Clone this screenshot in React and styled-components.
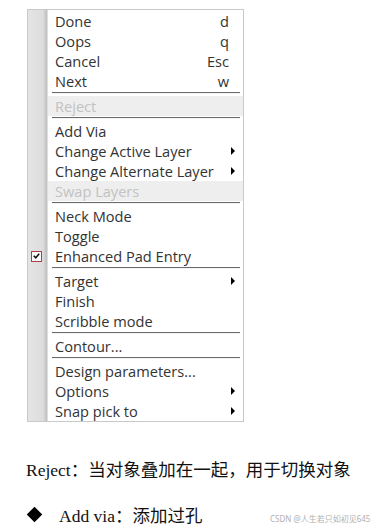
import React from 'react';
import styled, { createGlobalStyle } from 'styled-components';

const GlobalStyle = createGlobalStyle`
  html, body {
    margin: 0;
    padding: 0;
    background: #ffffff;
  }
`;

const Page = styled.div`
  width: 373px;
  height: 531px;
  padding: 9px 0 0 27px;
  box-sizing: border-box;
  position: relative;
  overflow: hidden;
`;

const Menu = styled.div`
  width: 217px;
  box-sizing: border-box;
  border: 1px solid #c9c9c9;
  padding: 1px 0 0;
  background: linear-gradient(
    to right,
    #e4e4e4 0,
    #dddddd 15px,
    #bdbdbd 19px,
    #ffffff 20px
  );
  font-family: 'Open Sans', 'Noto Sans', sans-serif;
  font-size: 14.6px;
  color: #333333;
`;

const Row = styled.div`
  display: grid;
  grid-template-columns: 20px 1fr auto;
  align-items: center;
  height: 20px;
  color: ${(p) => (p.$disabled ? '#c2c2c2' : '#333333')};
  background: ${(p) =>
    p.$disabled
      ? 'linear-gradient(to right, transparent 20px, #eeeeee 20px)'
      : 'transparent'};
`;

const Gutter = styled.div`
  display: flex;
  align-items: center;
  padding-left: 3px;
`;

const Label = styled.span`
  padding-left: 7px;
  white-space: nowrap;
  line-height: 20px;
`;

const Shortcut = styled.span`
  padding-right: 14px;
  line-height: 20px;
`;

const Arrow = styled.span`
  padding-right: 8px;
  display: flex;
  align-items: center;
`;

const Separator = styled.div`
  height: 5px;
  padding: 1px 3px 0 24px;
  box-sizing: border-box;
  &::before {
    content: '';
    display: block;
    height: 1px;
    background: #6a6a6a;
    border-bottom: 1px solid #f4f4f4;
  }
`;

const CheckBox = styled.span`
  width: 11px;
  height: 11px;
  box-sizing: border-box;
  border: 1px solid #b23c4a;
  background: #fafafa;
  display: flex;
  align-items: center;
  justify-content: center;
`;

const Note = styled.p`
  margin: 0;
  font-family: 'Liberation Serif', 'Noto Sans CJK SC', serif;
  font-size: 17.5px;
  color: #111111;
  white-space: nowrap;
`;

const Notes = styled.div`
  padding-top: 34px;
  display: flex;
  flex-direction: column;
  gap: 21px;
  margin-left: -1px;
`;

const Bullet = styled.div`
  display: flex;
  align-items: center;
  gap: 19px;
`;

const Diamond = styled.span`
  width: 11px;
  height: 11px;
  background: #000000;
  transform: rotate(45deg);
  margin-left: 3px;
`;

const Watermark = styled.span`
  position: absolute;
  left: 270px;
  top: 513px;
  font-family: 'Noto Sans', 'Noto Sans CJK SC', sans-serif;
  font-size: 8px;
  color: #b0b0b0;
  white-space: nowrap;
`;

const ArrowIcon = () => (
  <svg width="4" height="8" viewBox="0 0 4 8">
    <path d="M0 0 L4 4 L0 8 Z" fill="#000" />
  </svg>
);

const CheckIcon = () => (
  <svg width="7" height="6" viewBox="0 0 7 6">
    <path d="M0.8 2.8 L2.7 4.8 L6.2 0.8" stroke="#111" strokeWidth="1.5" fill="none" />
  </svg>
);

const groups = [
  [
    { label: 'Done', key: 'd' },
    { label: 'Oops', key: 'q' },
    { label: 'Cancel', key: 'Esc' },
    { label: 'Next', key: 'w' },
  ],
  [{ label: 'Reject', disabled: true }],
  [
    { label: 'Add Via' },
    { label: 'Change Active Layer', sub: true },
    { label: 'Change Alternate Layer', sub: true },
    { label: 'Swap Layers', disabled: true },
  ],
  [
    { label: 'Neck Mode' },
    { label: 'Toggle' },
    { label: 'Enhanced Pad Entry', checked: true },
  ],
  [
    { label: 'Target', sub: true },
    { label: 'Finish' },
    { label: 'Scribble mode' },
  ],
  [{ label: 'Contour...' }],
  [
    { label: 'Design parameters...' },
    { label: 'Options', sub: true },
    { label: 'Snap pick to', sub: true },
  ],
];

function MenuItem({ item }) {
  return (
    <Row $disabled={item.disabled}>
      <Gutter>
        {item.checked && (
          <CheckBox>
            <CheckIcon />
          </CheckBox>
        )}
      </Gutter>
      <Label>{item.label}</Label>
      {item.key && <Shortcut>{item.key}</Shortcut>}
      {item.sub && (
        <Arrow>
          <ArrowIcon />
        </Arrow>
      )}
    </Row>
  );
}

export default function App() {
  return (
    <Page>
      <GlobalStyle />
      <Menu>
        {groups.map((group, gi) => (
          <React.Fragment key={gi}>
            {gi > 0 && <Separator />}
            {group.map((item) => (
              <MenuItem key={item.label} item={item} />
            ))}
          </React.Fragment>
        ))}
      </Menu>
      <Notes>
        <Note>Reject：当对象叠加在一起，用于切换对象</Note>
        <Bullet>
          <Diamond />
          <Note>Add via：添加过孔</Note>
        </Bullet>
      </Notes>
      <Watermark>CSDN @人生若只如初见645</Watermark>
    </Page>
  );
}
